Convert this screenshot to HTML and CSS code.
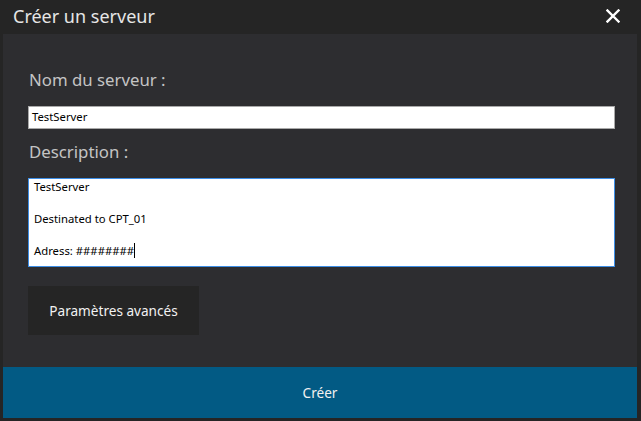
FILE: index.html
```html
<!DOCTYPE html>
<html lang="fr">
<head>
<meta charset="utf-8">
<link rel="stylesheet" href="styles.css">
</head>
<body>
<div class="window">
  <div class="titlebar">
    <span class="title">Créer un serveur</span>
    <span class="close" aria-label="Fermer">
      <svg width="14" height="14" viewBox="0 0 14 14"><path d="M1.5 1.5 L12.5 12.5 M12.5 1.5 L1.5 12.5" stroke="#fff" stroke-width="2.4" stroke-linecap="square"/></svg>
    </span>
  </div>
  <div class="panel">
    <div class="form">
      <div class="label">Nom du serveur :</div>
      <div class="input">TestServer</div>
      <div class="label desc">Description :</div>
      <div class="textarea">
        <div class="line">TestServer</div>
        <div class="line"></div>
        <div class="line">Destinated to CPT_01</div>
        <div class="line"></div>
        <div class="line">Adress: ########<span class="caret"></span></div>
      </div>
      <div class="btn-adv">Paramètres avancés</div>
    </div>
    <div class="btn-create">Créer</div>
  </div>
</div>
</body>
</html>
```
FILE: styles.css
```css
html, body {
  margin: 0;
  padding: 0;
  background: #252525;
}
body {
  width: 641px;
  height: 421px;
  overflow: hidden;
  font-family: "Noto Sans", "Open Sans", sans-serif;
}
.window {
  width: 641px;
  height: 421px;
  display: flex;
  flex-direction: column;
  background: #252525;
}
.titlebar {
  height: 34px;
  display: flex;
  align-items: center;
  justify-content: space-between;
  padding: 0 21px 0 13px;
  box-sizing: border-box;
}
.title {
  color: #e6e6e6;
  font-size: 18px;
  line-height: 20px;
  margin-top: -2px;
}
.close {
  display: flex;
  margin-top: -3px;
}
.panel {
  margin: 0 4px 3px 3px;
  flex: 1;
  background: #2d2d30;
  display: flex;
  flex-direction: column;
}
.form {
  flex: 1;
  padding: 34px 22px 0 25px;
  display: flex;
  flex-direction: column;
}
.label {
  color: #c4c4c4;
  font-size: 16.8px;
  line-height: 24px;
  padding-left: 1px;
  height: 38px;
}
.label.desc {
  margin-top: 11px;
  height: 38px;
}
.input {
  height: 23px;
  box-sizing: border-box;
  background: #fff;
  border: 1px solid #a9a9a9;
  font-size: 11.3px;
  line-height: 20px;
  padding-left: 3px;
  color: #000;
}
.textarea {
  height: 89px;
  box-sizing: border-box;
  background: #fff;
  border: 1px solid #3d8ee6;
  padding: 0 0 0 5px;
  font-size: 11.3px;
  color: #000;
}
.line {
  height: 16px;
  line-height: 16px;
  white-space: pre;
}
.caret {
  display: inline-block;
  width: 1px;
  height: 15px;
  background: #000;
  vertical-align: -3px;
}
.btn-adv {
  margin-top: 19px;
  width: 171px;
  height: 49px;
  background: #252525;
  color: #f2f2f2;
  font-size: 13.6px;
  display: flex;
  align-items: center;
  justify-content: center;
}
.btn-create {
  height: 51px;
  background: #025a84;
  color: #f2f2f2;
  font-size: 13.6px;
  display: flex;
  align-items: center;
  justify-content: center;
}
```
